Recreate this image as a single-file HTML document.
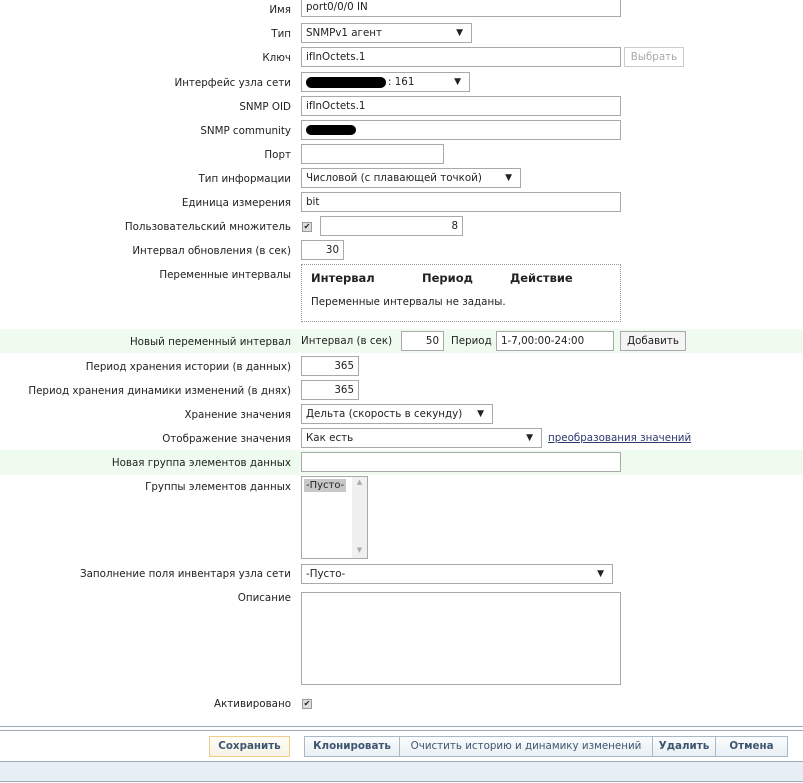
<!DOCTYPE html>
<html><head><meta charset="utf-8"><style>
*{box-sizing:border-box;margin:0;padding:0}
body{width:803px;height:783px;position:relative;overflow:hidden;background:#fff;font-family:"DejaVu Sans","Liberation Sans",sans-serif;font-size:10.3px;color:#222}
.a{position:absolute}
.l{position:absolute;right:512px;white-space:nowrap;text-align:right}
.i{position:absolute;border:1px solid #a9a9a9;background:#fff;padding:0 4px;white-space:nowrap;line-height:18px;height:20px}
.r{text-align:right}
.s:after{content:"▼";position:absolute;right:8px;top:0;font-size:9px}
.g{position:absolute;left:0;width:803px;background:#effbef}
.b{position:absolute;top:736px;height:21px;border:1px solid #aab8c4;background:linear-gradient(#fbfcfd,#e9eff4);color:#3d5670;font-weight:bold;font-size:10.3px;text-align:center;line-height:19px;white-space:nowrap}
.blob{position:absolute;background:#000;border-radius:8px}
.cb{position:absolute;width:10px;height:10px;border:1px solid #999;background:#ddd;font-size:8px;line-height:8px;text-align:center}
</style></head><body>
<div class="g" style="top:329px;height:24px"></div>
<div class="g" style="top:450px;height:25px"></div>

<div class="l" style="top:4px">Имя</div>
<div class="i" style="left:301px;top:-3px;width:320px">port0/0/0 IN</div>
<div class="l" style="top:28px">Тип</div>
<div class="i s" style="left:301px;top:23px;width:171px">SNMPv1 агент</div>
<div class="l" style="top:52px">Ключ</div>
<div class="i" style="left:301px;top:47px;width:320px">ifInOctets.1</div>
<div class="i" style="left:624px;top:47px;width:60px;color:#aaa;border-color:#ccc;text-align:center">Выбрать</div>
<div class="l" style="top:77px">Интерфейс узла сети</div>
<div class="i s" style="left:301px;top:72px;width:169px"><span style="padding-left:82px">: 161</span></div>
<div class="blob" style="left:306px;top:77px;width:80px;height:11px"></div>
<div class="l" style="top:101px">SNMP OID</div>
<div class="i" style="left:301px;top:96px;width:320px">ifInOctets.1</div>
<div class="l" style="top:125px">SNMP community</div>
<div class="i" style="left:301px;top:120px;width:320px"></div>
<div class="blob" style="left:306px;top:125px;width:50px;height:10px"></div>
<div class="l" style="top:149px">Порт</div>
<div class="i" style="left:301px;top:144px;width:143px"></div>
<div class="l" style="top:173px">Тип информации</div>
<div class="i s" style="left:301px;top:168px;width:220px">Числовой (с плавающей точкой)</div>
<div class="l" style="top:197px">Единица измерения</div>
<div class="i" style="left:301px;top:192px;width:320px">bit</div>
<div class="l" style="top:221px">Пользовательский множитель</div>
<div class="cb" style="left:302px;top:222px">✔</div>
<div class="i r" style="left:320px;top:216px;width:143px">8</div>
<div class="l" style="top:245px">Интервал обновления (в сек)</div>
<div class="i r" style="left:301px;top:240px;width:43px">30</div>
<div class="l" style="top:269px">Переменные интервалы</div>
<div class="a" style="left:301px;top:264px;width:320px;height:58px;border:1px dotted #999"></div>
<div class="a" style="left:311px;top:271px;font-weight:bold;font-size:11.5px">Интервал</div>
<div class="a" style="left:422px;top:271px;font-weight:bold;font-size:11.5px">Период</div>
<div class="a" style="left:510px;top:271px;font-weight:bold;font-size:11.5px">Действие</div>
<div class="a" style="left:311px;top:296px">Переменные интервалы не заданы.</div>

<div class="l" style="top:336px">Новый переменный интервал</div>
<div class="a" style="left:301px;top:335px">Интервал (в сек)</div>
<div class="i r" style="left:401px;top:331px;width:43px">50</div>
<div class="a" style="left:451px;top:335px">Период</div>
<div class="i" style="left:496px;top:331px;width:118px">1-7,00:00-24:00</div>
<div class="i" style="left:620px;top:331px;width:66px;text-align:center;background:#f4f4f4">Добавить</div>
<div class="l" style="top:361px">Период хранения истории (в данных)</div>
<div class="i r" style="left:301px;top:356px;width:58px">365</div>
<div class="l" style="top:385px">Период хранения динамики изменений (в днях)</div>
<div class="i r" style="left:301px;top:380px;width:58px">365</div>
<div class="l" style="top:409px">Хранение значения</div>
<div class="i s" style="left:301px;top:404px;width:192px">Дельта (скорость в секунду)</div>
<div class="l" style="top:433px">Отображение значения</div>
<div class="i s" style="left:301px;top:428px;width:241px">Как есть</div>
<div class="a" style="left:548px;top:432px;color:#2d3a6e;text-decoration:underline">преобразования значений</div>
<div class="l" style="top:457px">Новая группа элементов данных</div>
<div class="i" style="left:301px;top:452px;width:320px"></div>
<div class="l" style="top:481px">Группы элементов данных</div>
<div class="a" style="left:301px;top:476px;width:67px;height:83px;border:1px solid #a9a9a9"></div>
<div class="a" style="left:304px;top:479px;background:#c8c8c8;padding:0 2px;line-height:13px;font-size:10px">-Пусто-</div>
<div class="a" style="left:352px;top:477px;width:15px;height:81px;background:#f0f0f0;color:#aaa;font-size:7px;text-align:center;line-height:10px">▲<div style="margin-top:58px">▼</div></div>
<div class="l" style="top:568px">Заполнение поля инвентаря узла сети</div>
<div class="i s" style="left:301px;top:564px;width:312px">-Пусто-</div>
<div class="l" style="top:592px">Описание</div>
<div class="a" style="left:301px;top:592px;width:320px;height:93px;border:1px solid #a9a9a9"></div>
<div class="l" style="top:698px">Активировано</div>
<div class="cb" style="left:302px;top:699px">✔</div>

<div class="a" style="left:0;top:726px;width:803px;height:5px;border-top:1px solid #9eaab6;border-bottom:1px solid #9eaab6"></div>
<div class="b" style="left:209px;width:81px;border-color:#f0cd8c;background:linear-gradient(#fffdf6,#f6f2e6)">Сохранить</div>
<div class="b" style="left:304px;width:96px">Клонировать</div>
<div class="b" style="left:399px;width:254px;font-weight:normal">Очистить историю и динамику изменений</div>
<div class="b" style="left:652px;width:64px">Удалить</div>
<div class="b" style="left:715px;width:73px">Отмена</div>
<div class="a" style="left:0;top:761px;width:803px;height:21px;background:#e7eef5;border-top:1px solid #9eaab6;border-bottom:1px solid #9eaab6"></div>
</body></html>
